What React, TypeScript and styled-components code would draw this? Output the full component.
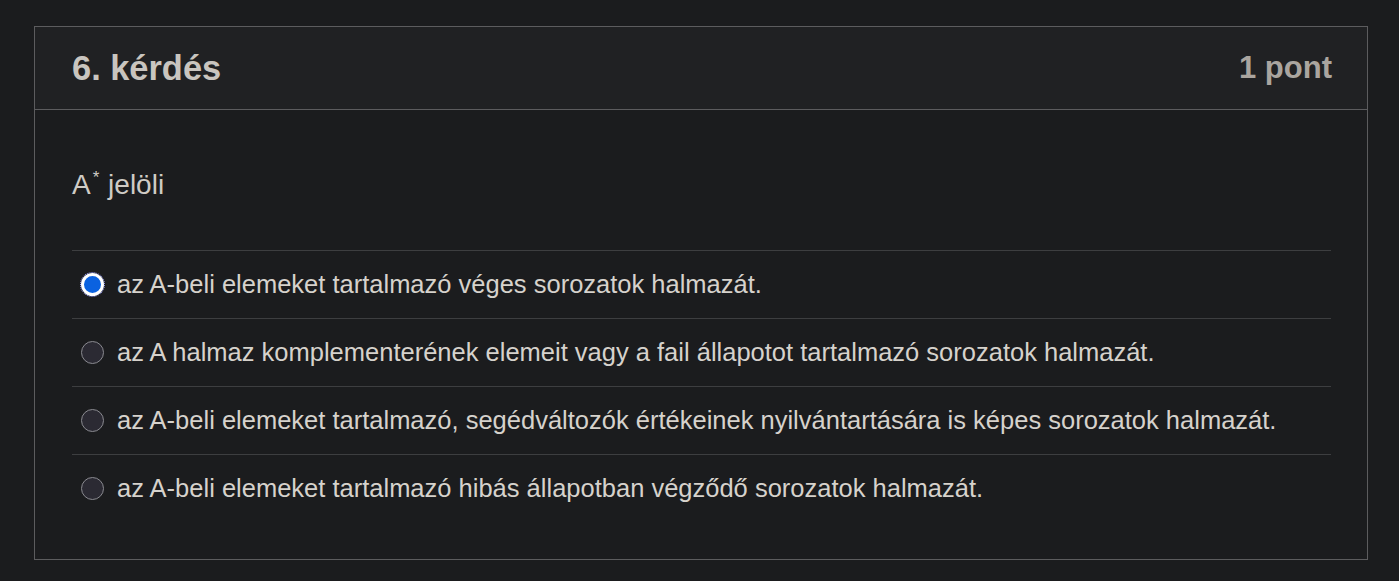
import React from "react";
import styled, { createGlobalStyle } from "styled-components";

const Global = createGlobalStyle`
  html, body { margin: 0; padding: 0; background: #1b1c1e; }
  body { font-family: "Liberation Sans", Arial, sans-serif; }
`;

const Page = styled.div`
  padding: 26px 31px 21px 34px;
`;

const Card = styled.section`
  border: 1px solid #5c5c5e;
  background: #1b1c1e;
`;

const Header = styled.header`
  display: flex;
  align-items: center;
  justify-content: space-between;
  height: 82px;
  padding: 0 35px 0 37px;
  background: #202123;
  border-bottom: 1px solid #5c5c5e;
`;

const Title = styled.h2`
  margin: 0;
  font-size: 34.4px;
  font-weight: 700;
  color: #c9c5bf;
`;

const Points = styled.span`
  font-size: 31px;
  font-weight: 700;
  color: #aaa59f;
`;

const Body = styled.div`
  padding: 59px 36px 37px 37px;
`;

const Question = styled.p`
  margin: 0 0 49px;
  font-size: 28px;
  line-height: 32px;
  color: #cfcbc5;
  sup {
    font-size: 17px;
    vertical-align: 11px;
    line-height: 0;
    margin-left: 2px;
    margin-right: 1px;
  }
`;

const Options = styled.ul`
  list-style: none;
  margin: 0;
  padding: 0;
`;

const Option = styled.li`
  display: flex;
  align-items: center;
  gap: 13px;
  height: 67px;
  padding-left: 9px;
  border-top: 1px solid #3d3e40;
  font-size: 25.5px;
  color: #d6d2cc;
`;

const Radio = styled.span<{ $checked?: boolean }>`
  box-sizing: border-box;
  flex: none;
  width: 23px;
  height: 23px;
  border-radius: 50%;
  border: ${(p) => (p.$checked ? "3px solid #ffffff" : "1px solid #8a8a90")};
  background: ${(p) => (p.$checked ? "#0b62e0" : "#2b2a33")};
  outline: ${(p) => (p.$checked ? "1px dotted #9aa0ff" : "none")};
`;

const options = [
  "az A-beli elemeket tartalmazó véges sorozatok halmazát.",
  "az A halmaz komplementerének elemeit vagy a fail állapotot tartalmazó sorozatok halmazát.",
  "az A-beli elemeket tartalmazó, segédváltozók értékeinek nyilvántartására is képes sorozatok halmazát.",
  "az A-beli elemeket tartalmazó hibás állapotban végződő sorozatok halmazát.",
];

export default function App() {
  return (
    <>
      <Global />
      <Page>
        <Card>
          <Header>
            <Title>6. kérdés</Title>
            <Points>1 pont</Points>
          </Header>
          <Body>
            <Question>
              A<sup>*</sup> jelöli
            </Question>
            <Options>
              {options.map((o, i) => (
                <Option key={i}>
                  <Radio $checked={i === 0} />
                  {o}
                </Option>
              ))}
            </Options>
          </Body>
        </Card>
      </Page>
    </>
  );
}
